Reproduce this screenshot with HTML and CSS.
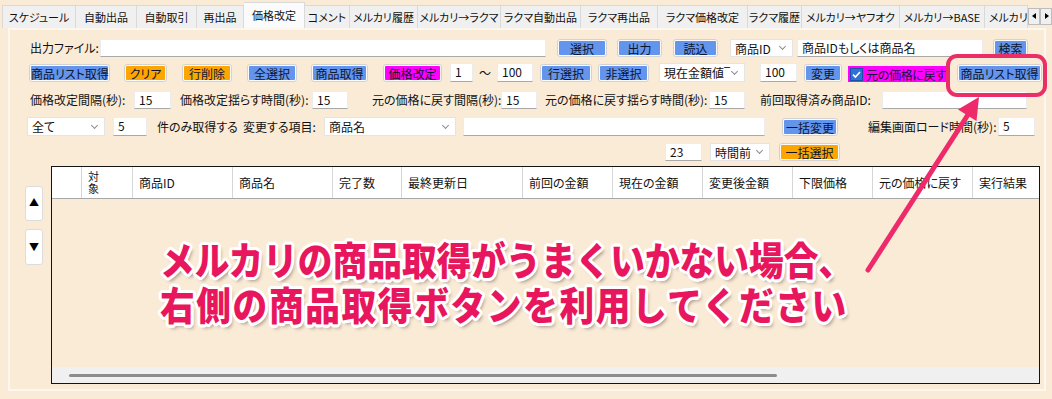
FILE: index.html
```html
<!DOCTYPE html>
<html lang="ja">
<head>
<meta charset="utf-8">
<title>価格改定</title>
<link rel="stylesheet" href="styles.css">
</head>
<body>
<div class="tabs">
  <div class="tab">スケジュール</div>
  <div class="tab">自動出品</div>
  <div class="tab">自動取引</div>
  <div class="tab">再出品</div>
  <div class="tab active">価格改定</div>
  <div class="tab">コメント</div>
  <div class="tab">メルカリ履歴</div>
  <div class="tab">メルカリ→ラクマ</div>
  <div class="tab">ラクマ自動出品</div>
  <div class="tab">ラクマ再出品</div>
  <div class="tab">ラクマ価格改定</div>
  <div class="tab">ラクマ履歴</div>
  <div class="tab">メルカリ→ヤフオク</div>
  <div class="tab">メルカリ→BASE</div>
  <div class="tab cut">メルカリ</div>
  <div class="tab-arrows"><span class="ta left"></span><span class="ta right"></span></div>
</div>

<div class="panel">
  <div class="row r1">
    <span class="lbl ml20 w70">出力ファイル:</span>
    <span class="inp w446"></span>
    <span class="btn ml11 w50">選択</span>
    <span class="btn ml10 w45">出力</span>
    <span class="btn ml11 w45">読込</span>
    <span class="sel ml12 w63">商品ID<i class="chev"></i></span>
    <span class="inp ml4 w186">商品IDもしくは商品名</span>
    <span class="btn ml10 w35">検索</span>
  </div>

  <div class="row r2">
    <span class="btn ml19 w81">商品リスト取得</span>
    <span class="btn orange ml14 w43">クリア</span>
    <span class="btn orange ml15 w50">行削除</span>
    <span class="btn ml15 w50">全選択</span>
    <span class="btn ml14 w57">商品取得</span>
    <span class="btn magenta ml15 w59">価格改定</span>
    <span class="inp ml8 w23">1</span>
    <span class="tilde w24">～</span>
    <span class="inp w36">100</span>
    <span class="btn ml7 w52">行選択</span>
    <span class="btn ml6 w51">非選択</span>
    <span class="sel ml10 w86">現在金額値&#8254;<i class="chev"></i></span>
    <span class="inp ml15 w37">100</span>
    <span class="btn ml7 w38">変更</span>
    <label class="chk ml6 w98"><svg class="box" width="13" height="13" viewBox="0 0 13 13"><rect x="0.5" y="0.5" width="12" height="12" fill="#2f6fd8" stroke="#1d4fa8"/><path d="M3 6.6 L5.4 9 L10 4" fill="none" stroke="#fff" stroke-width="1.6"/></svg>元の価格に戻す</label>
    <span class="btn ml11 w85">商品リスト取得</span>
  </div>

  <div class="row r3">
    <span class="lbl ml20 w104">価格改定間隔(秒):</span>
    <span class="inp w37">15</span>
    <span class="lbl ml9 w132">価格改定揺らす時間(秒):</span>
    <span class="inp w36">15</span>
    <span class="lbl ml24 w129">元の価格に戻す間隔(秒):</span>
    <span class="inp w36">15</span>
    <span class="lbl ml8 w164">元の価格に戻す揺らす時間(秒):</span>
    <span class="inp w36">15</span>
    <span class="lbl ml15 w122">前回取得済み商品ID:</span>
    <span class="inp w145"></span>
  </div>

  <div class="row r4">
    <span class="sel ml17 w78">全て<i class="chev"></i></span>
    <span class="inp ml8 w34">5</span>
    <span class="lbl ml10 w86">件のみ取得する</span>
    <span class="lbl w81">変更する項目:</span>
    <span class="sel w132">商品名<i class="chev"></i></span>
    <span class="inp ml7 w302"></span>
    <span class="btn ml17 w56">一括変更</span>
    <span class="lbl ml30 w130">編集画面ロード時間(秒):</span>
    <span class="inp w37">5</span>
  </div>

  <div class="row r5">
    <span class="inp ml655 w37">23</span>
    <span class="sel ml8 w60">時間前<i class="chev"></i></span>
    <span class="btn orange ml9 w61">一括選択</span>
  </div>

  <div class="area">
    <div class="side">
      <div class="sbtn up">&#9650;</div>
      <div class="sbtn down">&#9660;</div>
    </div>
    <div class="grid">
      <div class="head">
        <div class="hc c0"></div>
        <div class="hc c1 two"><span class="ch">対</span><span class="ch">象</span></div>
        <div class="hc c2">商品ID</div>
        <div class="hc c3">商品名</div>
        <div class="hc c4">完了数</div>
        <div class="hc c5">最終更新日</div>
        <div class="hc c6">前回の金額</div>
        <div class="hc c7">現在の金額</div>
        <div class="hc c8">変更後金額</div>
        <div class="hc c9">下限価格</div>
        <div class="hc c10">元の価格に戻す</div>
        <div class="hc c11">実行結果</div>
      </div>
      <div class="gbody"></div>
      <div class="hscroll"><div class="thumb"></div></div>
    </div>
  </div>
</div>

<div class="note">
  <div class="note-line">メルカリの商品取得がうまくいかない場合、</div>
  <div class="note-line wide">右側の商品取得ボタンを利用してください</div>
</div>

<svg class="overlay" width="1052" height="399" viewBox="0 0 1052 399">
  <rect x="948" y="56" width="97" height="39" rx="9" ry="9" fill="none" stroke="#ea2f68" stroke-width="4"/>
  <line x1="868" y1="270" x2="971" y2="110" stroke="#ee2a6b" stroke-width="5" stroke-linecap="round"/>
  <polygon points="979,97 976.5,121 958,109.5" fill="#ee2a6b"/>
</svg>
</body>
</html>
```

FILE: styles.css
```css
* { box-sizing: border-box; }
html, body { margin: 0; padding: 0; }
body {
  width: 1052px;
  height: 399px;
  overflow: hidden;
  position: relative;
  background: #faebd7;
  font-family: "Noto Sans CJK JP", "Noto Sans", sans-serif;
  font-size: 12px;
  color: #111;
  font-feature-settings: "palt";
}

/* ---------- tabs ---------- */
.tabs {
  display: flex;
  align-items: flex-end;
  height: 28px;
  padding-left: 2px;
}
.tab {
  height: 23px;
  line-height: 22px;
  font-size: 11px;
  text-align: center;
  white-space: nowrap;
  background: #f0f0f0;
  border-top: 1px solid #d9d9d9;
  border-right: 1px solid #d9d9d9;
}
.tab:first-child { border-left: 1px solid #d9d9d9; }
.tab.active {
  height: 26px;
  line-height: 25px;
  background: #fbfbfb;
}
.tab.cut { text-align: left; padding-left: 4px; overflow: hidden; }
.tab:nth-child(1) { width: 74px; }
.tab:nth-child(2) { width: 61px; }
.tab:nth-child(3) { width: 60px; }
.tab:nth-child(4) { width: 47px; }
.tab:nth-child(5) { width: 61px; }
.tab:nth-child(6) { width: 45px; }
.tab:nth-child(7) { width: 68px; }
.tab:nth-child(8) { width: 83px; }
.tab:nth-child(9) { width: 80px; }
.tab:nth-child(10) { width: 77px; }
.tab:nth-child(11) { width: 90px; }
.tab:nth-child(12) { width: 54px; }
.tab:nth-child(13) { width: 98px; }
.tab:nth-child(14) { width: 85px; }
.tab:nth-child(15) { width: 43px; }
.tab-arrows {
  display: flex;
  height: 17px;
  align-self: center;
  margin-top: 4px;
}
.ta {
  position: relative;
  width: 12px;
  height: 17px;
  background: #f0f0f0;
  border: 1px solid #bdbdbd;
}
.ta::after {
  content: "";
  position: absolute;
  top: 4px;
  left: 3px;
  border-top: 3px solid transparent;
  border-bottom: 3px solid transparent;
}
.ta.left::after { border-right: 4px solid #000; }
.ta.right::after { border-left: 4px solid #000; left: 4px; }

/* ---------- panel ---------- */
.panel {
  margin-left: 8px;
  width: 1038px;
  height: 363px;
  border: 2px solid #fdf7f0;
}
.row {
  display: flex;
  align-items: center;
  white-space: nowrap;
}
.r1 { margin-top: 9px; height: 18px; }
.r2 { margin-top: 6px; height: 19px; }
.r3 { margin-top: 9px; height: 18px; }
.r4 { margin-top: 8px; height: 19px; }
.r5 { margin-top: 7px; height: 18px; }

.row > * { flex: none; }
.lbl { white-space: nowrap; line-height: 18px; }
.inp {
  height: 100%;
  background: #fff;
  border: 1px solid #ececec;
  border-bottom-color: #a9a9a9;
  padding-left: 4px;
  line-height: 16px;
  white-space: nowrap;
  overflow: hidden;
}
.btn {
  height: 18px;
  line-height: 15px;
  text-align: center;
  border: 1px solid #d2d2d2;
  border-radius: 3px;
  padding: 1px;
  background: linear-gradient(#6495ed, #6495ed) content-box, #fbfbfb;
  color: #0d1530;
  white-space: nowrap;
}
.btn.orange { background: linear-gradient(#ffa500, #ffa500) content-box, #fbfbfb; }
.btn.magenta { background: linear-gradient(#ff00ff, #ff00ff) content-box, #fbfbfb; }
.sel {
  position: relative;
  height: 100%;
  background: #fff;
  border: 1px solid #e4e4e4;
  padding-left: 4px;
  line-height: 17px;
  white-space: nowrap;
  overflow: hidden;
}
.chev {
  position: absolute;
  right: 7px;
  top: 50%;
  width: 5px;
  height: 5px;
  margin-top: -4px;
  border-right: 1px solid #8c8c8c;
  border-bottom: 1px solid #8c8c8c;
  transform: rotate(45deg);
}
.tilde { text-align: center; line-height: 18px; }
.chk {
  align-self: flex-end;
  height: 16px;
  display: flex;
  align-items: center;
  gap: 3px;
  padding-left: 2px;
  background: #ff00ff;
  color: #14143c;
  white-space: nowrap;
  letter-spacing: -0.3px;
}
.chk .box { flex: none; }

/* spacing utilities */
.ml4 { margin-left: 4px; } .ml6 { margin-left: 6px; } .ml7 { margin-left: 7px; }
.ml8 { margin-left: 8px; } .ml9 { margin-left: 9px; } .ml10 { margin-left: 10px; }
.ml11 { margin-left: 11px; } .ml12 { margin-left: 12px; } .ml14 { margin-left: 14px; }
.ml15 { margin-left: 15px; } .ml17 { margin-left: 17px; } .ml19 { margin-left: 19px; }
.ml20 { margin-left: 20px; } .ml24 { margin-left: 24px; } .ml30 { margin-left: 30px; }
.ml655 { margin-left: 655px; }

.w23 { width: 23px; } .w24 { width: 24px; } .w34 { width: 34px; } .w35 { width: 35px; }
.w36 { width: 36px; } .w37 { width: 37px; } .w38 { width: 38px; } .w43 { width: 43px; }
.w45 { width: 45px; } .w50 { width: 50px; } .w51 { width: 51px; } .w52 { width: 52px; }
.w56 { width: 56px; } .w57 { width: 57px; } .w59 { width: 59px; } .w60 { width: 60px; }
.w61 { width: 61px; } .w63 { width: 63px; } .w70 { width: 70px; } .w78 { width: 78px; }
.w81 { width: 81px; } .w85 { width: 85px; } .w86 { width: 86px; } .w98 { width: 98px; }
.w104 { width: 104px; } .w122 { width: 122px; } .w129 { width: 129px; } .w130 { width: 130px; }
.w132 { width: 132px; } .w145 { width: 145px; } .w164 { width: 164px; } .w186 { width: 186px; }
.w302 { width: 302px; } .w446 { width: 446px; }

/* ---------- table area ---------- */
.area {
  display: flex;
  margin-top: 5px;
}
.side {
  margin-left: 15px;
  width: 18px;
  flex: none;
}
.sbtn {
  width: 18px;
  background: #fff;
  border: 1px solid #dcdcdc;
  border-radius: 3px;
  font-size: 10px;
  text-align: center;
  color: #000;
}
.sbtn.up { margin-top: 20px; height: 35px; line-height: 30px; }
.sbtn.down { margin-top: 8px; height: 36px; line-height: 34px; }

.grid {
  margin-left: 8px;
  width: 989px;
  height: 218px;
  border: 1px solid #141414;
  display: flex;
  flex-direction: column;
}
.head {
  display: flex;
  height: 32px;
  background: #fff;
  border-bottom: 1px solid #a8a8a8;
  flex: none;
}
.hc {
  border-right: 1px solid #d6d6d6;
  padding-left: 6px;
  line-height: 31px;
  white-space: nowrap;
}
.hc.two {
  display: flex;
  flex-direction: column;
  padding-top: 3px;
}
.ch {
  display: block;
  height: 12px;
  font-size: 11px;
  line-height: 12px;
}
.c0 { width: 30px; } .c1 { width: 51px; } .c2 { width: 100px; } .c3 { width: 100px; }
.c4 { width: 69px; } .c5 { width: 121px; } .c6 { width: 90px; } .c7 { width: 90px; }
.c8 { width: 90px; } .c9 { width: 80px; } .c10 { width: 100px; }
.c11 { flex: 1; border-right: none; }
.gbody { flex: 1; }
.hscroll {
  height: 16px;
  background: #f0f0f0;
  flex: none;
  padding-top: 7px;
}
.thumb {
  margin-left: 17px;
  width: 708px;
  height: 3px;
  border-radius: 2px;
  background: #8c8c8c;
}

/* ---------- annotation overlay ---------- */
.note {
  position: absolute;
  left: 160px;
  top: 236px;
  transform: scaleX(0.89);
  transform-origin: 0 0;
  font-family: "Noto Sans CJK JP", sans-serif;
  font-feature-settings: normal;
  font-weight: 900;
  font-size: 39px;
  line-height: 45px;
  color: #e8175d;
  white-space: nowrap;
  text-shadow:
    3px 0 0 #fff, -3px 0 0 #fff, 0 3px 0 #fff, 0 -3px 0 #fff,
    2px 2px 0 #fff, -2px 2px 0 #fff, 2px -2px 0 #fff, -2px -2px 0 #fff,
    3px 1px 0 #fff, -3px 1px 0 #fff, 1px 3px 0 #fff, -1px 3px 0 #fff,
    3px -1px 0 #fff, -3px -1px 0 #fff, 1px -3px 0 #fff, -1px -3px 0 #fff,
    3px 4px 4px rgba(0, 0, 0, 0.35);
}
.note-line.wide { letter-spacing: 1.8px; }
.overlay {
  position: absolute;
  left: 0;
  top: 0;
  pointer-events: none;
}
```
